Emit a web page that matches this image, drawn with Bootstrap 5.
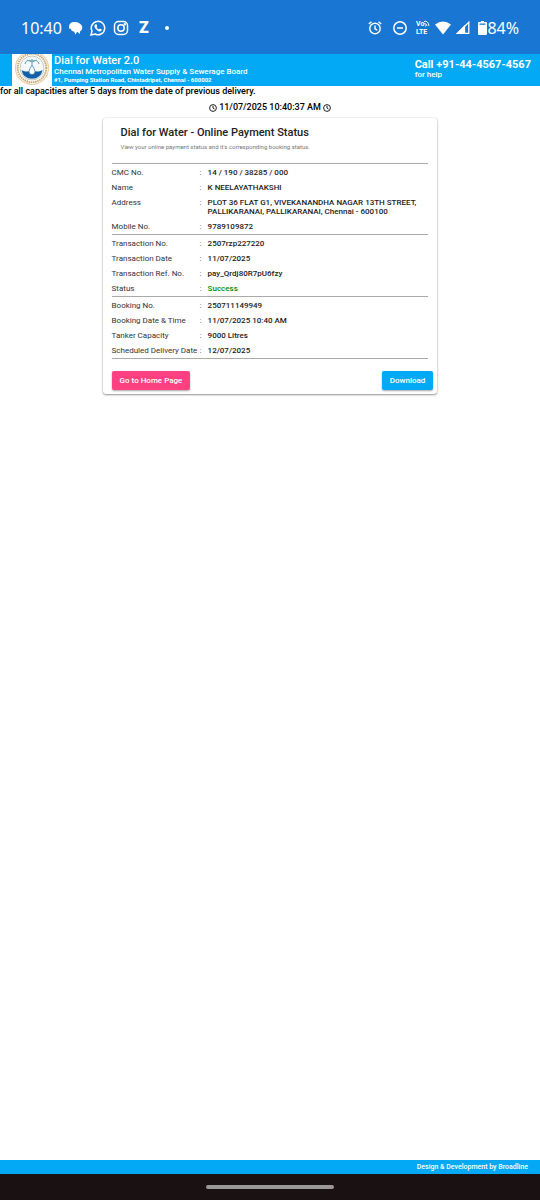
<!DOCTYPE html>
<html lang="en">
<head>
<meta charset="utf-8">
<meta name="viewport" content="width=device-width, initial-scale=1">
<title>Dial for Water 2.0</title>
<link href="https://cdn.jsdelivr.net/npm/bootstrap@5.3.0/dist/css/bootstrap.min.css" rel="stylesheet">
<style>
body{font-family:Roboto,"Liberation Sans",sans-serif;font-size:8px;line-height:9px;color:#222;background:#fff}
svg{display:block;flex:none}
.status-bar{background:#1976d2;height:54px;padding:2px 21px 0;font-family:"Noto Sans",sans-serif;font-weight:400;font-size:16px;line-height:24px;color:#fff}
.status-icons{gap:7px}
.zee{font:900 16px/16px Roboto,sans-serif;width:16px;text-align:center}
.volte{font:700 7px/8px Roboto,sans-serif}
.site-head{background:#03a9f4;color:#fff;height:32px;padding:0 9px 0 12px}
.logo-box{width:40px;height:32px;background:#fff;overflow:hidden}
.brand-text{padding:1px 0 0 2px}
.brand-title{font-size:11px;line-height:12px;font-weight:500}
.brand-org{font-size:8px;line-height:9px;font-weight:500}
.brand-addr{font-size:6px;line-height:8px;font-weight:700}
.call-box{padding-top:5px}
.call-no{font-size:11px;line-height:12px;font-weight:700}
.call-help{font-size:8px;line-height:8px;font-weight:500}
.notice,.clock{font-size:9px;line-height:11px;font-weight:500;color:#000}
.clock{margin-top:5px;gap:2px}
.pay-card{width:62%;margin-top:5px;padding:9px 4px 4px 9px;border-radius:3px;background:#fff;box-shadow:0 1px 2px rgba(0,0,0,.4),0 0 2px rgba(0,0,0,.15)}
.pay-head{padding:0 9px 12px}
.pay-title{font-size:11px;line-height:12px;font-weight:500;margin:0}
.pay-sub{font-size:6px;line-height:9px;color:#777;margin:3px 0 0}
.pay-body{padding-right:5px}
.info{width:100%;border-top:1px solid #aaa;border-collapse:separate;border-spacing:0;padding-top:1px;margin:0}
.info:last-child{border-bottom:1px solid #aaa}
.info th,.info td{padding:3px 0;vertical-align:top;text-align:left}
.info th{font-weight:400;width:88px;color:#333}
.info td{font-weight:500}
.info .sep{font-weight:400;width:8px;color:#555}
.info .ok{color:#008a00}
.act{font-size:8px;line-height:11px;font-weight:500;padding:4px 8px;border:0;border-radius:2px;color:#fff;box-shadow:0 1px 2px rgba(0,0,0,.35)}
.act-home{background:#ff4081}.act-down{background:#03a9f4}
.acts{margin-top:12px}
.site-foot{background:#03a9f4;color:#fff;font-size:7px;line-height:14px;font-weight:500;padding-right:12px}
.nav-strip{background:#1a1212;height:26px}
.pill{width:128px;height:4px;border-radius:2px;background:#9c9898}
</style>
</head>
<body class="d-flex flex-column min-vh-100">
<div class="status-bar d-flex justify-content-between align-items-center">
 <div class="status-icons d-flex align-items-center">
  <span>10:40</span>
  <svg width="14" height="14" viewBox="0 0 14 14" fill="#fff"><path d="M5 1c3 0 5 .5 6 2 3 1 3 6 0 7.500V13L8.500 11H8l-1.500 2.500L5 10.500C3 10.500 2 9 2 8L0 7.500C-.5 3 2 1 5 1z"/></svg>
  <svg width="16" height="16" viewBox="0 0 16 16" fill="none" stroke="#fff" stroke-width="1.500"><path d="M1 15l1-4a6.700 6.700 0 1 1 3 3z"/><path d="M5 4.500l1.500-.2.700 2-.7.900c.6 1.100 1.300 1.800 2.400 2.300l1-.9 1.900 1c-.2 1.800-1.800 2.100-3.100 1.600C6.500 10.400 4.400 8 4.400 6.100c0-.7.200-1.200.6-1.600z" fill="#fff" stroke="none"/></svg>
  <svg width="16" height="16" viewBox="0 0 16 16" fill="none" stroke="#fff" stroke-width="1.500"><rect x="1.500" y="1.500" width="13" height="13" rx="4"/><circle cx="8" cy="8" r="3.200"/><circle cx="11.800" cy="4.200" r=".5" fill="#fff"/></svg>
  <span class="zee">Z</span>
  <svg width="16" height="16" viewBox="0 0 16 16"><circle cx="8" cy="8" r="2" fill="#fff"/></svg>
 </div>
 <div class="d-flex align-items-center">
  <svg width="14" height="16" viewBox="0 0 14 16" fill="none" stroke="#fff" stroke-width="1.400"><circle cx="7" cy="8.500" r="5.200"/><path d="M7 5.500v3.300l2.200 1.400M.8 4L3.500 1.700M13.200 4L10.500 1.700"/></svg>
  <svg class="mx-2" width="18" height="16" viewBox="0 0 18 16" fill="none" stroke="#fff" stroke-width="1.500"><circle cx="10" cy="8" r="6.200"/><path d="M7 8h6"/></svg>
  <span class="volte d-flex flex-column"><span class="d-flex">Vo<svg width="6" height="7" viewBox="0 0 6 7" fill="none" stroke="#fff"><path d="M0 1.500q4-1.500 5 4.500M.5 3.500q2 0 2.500 2.500M1 6h1"/></svg></span><span>LTE</span></span>
  <svg class="ms-1" width="18" height="16" viewBox="0 0 18 16" fill="#fff"><path d="M1 4.500q8-6 16 0L9 14.500z"/></svg>
  <svg class="ms-1" width="14" height="16" viewBox="0 0 14 16" fill="none" stroke="#fff" stroke-width="1.300"><path d="M12.800 2.200v11.100H1.500z"/><path d="M8.500 6.300v7H1.500z" fill="#fff"/></svg>
  <svg class="ms-2" width="9" height="16" viewBox="0 0 9 16" fill="#fff"><path d="M3 1h3v1h2q1 0 1 1v11q0 1-1 1H1q-1 0-1-1V3q0-1 1-1h2z"/><path d="M1.500 3.500h6v1.300h-6z" fill="#1976d2"/></svg>
  <span>84%</span>
 </div>
</div>
<header class="site-head d-flex justify-content-between">
 <div class="d-flex">
  <div class="logo-box">
   <svg width="40" height="32" viewBox="0 0 40 32" fill="none"><circle cx="20" cy="14" r="16.500" stroke="#e6cfa9" stroke-width="1.200"/><circle cx="20" cy="14" r="14.300" stroke="#c9a778" stroke-width="2" stroke-dasharray="1.500 .7"/><circle cx="20" cy="14" r="12" fill="#f4fafc" stroke="#b9b9a8" stroke-width=".8"/><path d="M9.500 16q5 3 10.500 0 5.500 3 10.500 0-1.500 8.500-10.500 8.800Q11 24.500 9.500 16z" fill="#1260a8"/><path d="M20 11q-3 4.500-3 6.500a3 3 0 0 0 6 0q0-2-3-6.500z" fill="#fff" stroke="#2e719f" stroke-width=".7"/><path d="M20 11V5M13 10q1-5 7-3 6-2 7 3M15 6l5 2 5-2" stroke="#6da5b5"/></svg>
  </div>
  <div class="brand-text">
   <div class="brand-title">Dial for Water 2.0</div>
   <div class="brand-org">Chennai Metropolitan Water Supply &amp; Sewerage Board</div>
   <div class="brand-addr">#1, Pumping Station Road, Chintadripet, Chennai - 600002</div>
  </div>
 </div>
 <div class="call-box">
  <div class="call-no">Call +91-44-4567-4567</div>
  <div class="call-help">for help</div>
 </div>
</header>
<main class="flex-grow-1">
 <div class="notice text-nowrap overflow-hidden">for all capacities after 5 days from the date of previous delivery.</div>
 <div class="clock d-flex justify-content-center align-items-center">
  <svg width="8" height="8" viewBox="0 0 8 8" fill="none" stroke="#222"><circle cx="4" cy="4" r="3.400"/><path d="M4 1.800V4l1.500 1"/></svg>
  <span>11/07/2025 10:40:37 AM</span>
  <svg width="8" height="8" viewBox="0 0 8 8" fill="none" stroke="#222"><circle cx="4" cy="4" r="3.400"/><path d="M4 1.800V4l1.500 1"/></svg>
 </div>
 <section class="pay-card mx-auto">
  <div class="pay-head">
   <h1 class="pay-title">Dial for Water - Online Payment Status</h1>
   <p class="pay-sub">View your online payment status and it's corresponding booking status.</p>
  </div>
  <div class="pay-body">
   <table class="info">
    <tr><th scope="row">CMC No.</th><td class="sep">:</td><td>14 / 190 / 38285 / 000</td></tr>
    <tr><th scope="row">Name</th><td class="sep">:</td><td>K NEELAYATHAKSHI</td></tr>
    <tr><th scope="row">Address</th><td class="sep">:</td><td>PLOT 36 FLAT G1, VIVEKANANDHA NAGAR 13TH STREET,<br>PALLIKARANAI, PALLIKARANAI, Chennai - 600100</td></tr>
    <tr><th scope="row">Mobile No.</th><td class="sep">:</td><td>9789109872</td></tr>
   </table>
   <table class="info">
    <tr><th scope="row">Transaction No.</th><td class="sep">:</td><td>2507rzp227220</td></tr>
    <tr><th scope="row">Transaction Date</th><td class="sep">:</td><td>11/07/2025</td></tr>
    <tr><th scope="row">Transaction Ref. No.</th><td class="sep">:</td><td>pay_Qrdj80R7pU6fzy</td></tr>
    <tr><th scope="row">Status</th><td class="sep">:</td><td class="ok">Success</td></tr>
   </table>
   <table class="info">
    <tr><th scope="row">Booking No.</th><td class="sep">:</td><td>250711149949</td></tr>
    <tr><th scope="row">Booking Date &amp; Time</th><td class="sep">:</td><td>11/07/2025 10:40 AM</td></tr>
    <tr><th scope="row">Tanker Capacity</th><td class="sep">:</td><td>9000 Litres</td></tr>
    <tr><th scope="row">Scheduled Delivery Date</th><td class="sep">:</td><td>12/07/2025</td></tr>
   </table>
  </div>
  <div class="acts d-flex justify-content-between">
   <button type="button" class="btn act act-home">Go to Home Page</button>
   <button type="button" class="btn act act-down">Download</button>
  </div>
 </section>
</main>
<footer class="site-foot text-end">Design &amp; Development by Broadline</footer>
<div class="nav-strip d-flex align-items-center justify-content-center"><div class="pill"></div></div>
<script src="https://cdn.jsdelivr.net/npm/bootstrap@5.3.0/dist/js/bootstrap.bundle.min.js"></script>
</body>
</html>
